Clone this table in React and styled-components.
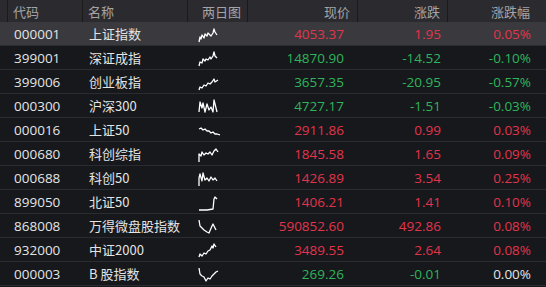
import React from 'react';
import styled, { createGlobalStyle } from 'styled-components';

const GlobalStyle = createGlobalStyle`
  html, body {
    margin: 0;
    padding: 0;
    background: #16181c;
    overflow: hidden;
  }
`;

const COLS = '8px 75px 105px 60px 110px 90px 98px';

const Table = styled.div`
  width: 546px;
  height: 287px;
  background: #16181c;
  font-family: 'Open Sans', 'Noto Sans CJK SC', sans-serif;
  color: #e4e4e4;
  overflow: hidden;
`;

const HeaderRow = styled.div`
  display: grid;
  grid-template-columns: ${COLS};
  height: 22px;
  background: #2b2b2f;
`;

const HeadCell = styled.div`
  display: flex;
  align-items: center;
  justify-content: ${(p) => (p.$right ? 'flex-end' : 'flex-start')};
  padding: ${(p) => p.$pad || '0 6px'};
  border-right: 1px solid #1a1a1d;
  font-family: 'Noto Sans CJK SC', sans-serif;
  font-size: 13px;
  color: #a4a4a8;
  &:last-child {
    border-right: none;
  }
`;

const Row = styled.div`
  display: grid;
  grid-template-columns: ${COLS};
  height: 23px;
  border-bottom: 1px solid #2a2c31;
  background: ${(p) => (p.$active ? '#3a3a3e' : '#16181c')};
`;

const Cell = styled.div`
  display: flex;
  align-items: center;
  justify-content: ${(p) => (p.$right ? 'flex-end' : 'flex-start')};
  padding: ${(p) => p.$pad || '0 6px'};
  font-size: 13.5px;
  color: ${(p) => p.$color || '#e4e4e4'};
  white-space: nowrap;
`;

const Name = styled(Cell)`
  font-family: 'Noto Sans CJK SC', sans-serif;
  font-size: 13px;
`;

const Spark = styled.svg`
  display: block;
  margin-top: 2px;
`;

const RED = '#e2344b';
const GREEN = '#2fb55b';

const tone = (v) => (v > 0 ? RED : v < 0 ? GREEN : '#e4e4e4');

const rows = [
  ['000001', '上证指数', '4053.37', '1.95', '0.05%', 1, '0,14 1,9 2,11 3,7 5,10 6,6 8,8 9,5 11,7 12,8 14,5 15,1 16,4 18,7'],
  ['399001', '深证成指', '14870.90', '-14.52', '-0.10%', -1, '0,14 1,10 3,11 4,7 6,9 7,7 9,8 11,5 12,7 14,4 15,0 16,4 18,6'],
  ['399006', '创业板指', '3657.35', '-20.95', '-0.57%', -1, '0,14 1,11 3,12 5,9 7,10 9,7 11,8 13,6 15,3 16,6 19,4'],
  ['000300', '沪深300', '4727.17', '-1.51', '-0.03%', -1, '0,12 1,2 3,8 4,3 6,12 8,4 10,10 12,7 14,12 15,0 17,8 18,12'],
  ['000016', '上证50', '2911.86', '0.99', '0.03%', 1, '0,5 2,4 4,6 6,5 8,7 10,7 12,9 14,8 16,10 18,10 21,11'],
  ['000680', '科创综指', '1845.58', '1.65', '0.09%', 1, '0,14 0,6 2,8 3,4 5,7 7,5 9,6 11,4 13,7 15,3 17,1 19,4'],
  ['000688', '科创50', '1426.89', '3.54', '0.25%', 1, '0,14 0,6 1,2 3,9 4,1 6,8 8,6 10,9 12,5 14,8 16,6 18,9'],
  ['899050', '北证50', '1406.21', '1.41', '0.10%', 1, '0,14 8,14 14,13 15,3 16,1 18,3'],
  ['868008', '万得微盘股指数', '590852.60', '492.86', '0.08%', 1, '0,0 1,6 3,8 5,10 8,12 10,13 13,6 14,4 16,8 17,10'],
  ['932000', '中证2000', '3489.55', '2.64', '0.08%', 1, '0,13 1,10 3,12 5,9 7,10 9,7 11,6 13,2 14,4 15,0 17,3'],
  ['000003', ' B 股指数', '269.26', '-0.01', '0.00%', -1, '0,0 1,6 3,8 5,9 7,13 9,10 11,11 13,8 15,6 17,4 19,3'],
];

function Sparkline({ points }) {
  return (
    <Spark width="22" height="16" viewBox="-1 -1 22 16">
      <polyline points={points} fill="none" stroke="#ffffff" strokeWidth="1.3" strokeLinejoin="round" />
    </Spark>
  );
}

export default function App() {
  return (
    <Table>
      <GlobalStyle />
      <HeaderRow>
        <HeadCell $pad="0" />
        <HeadCell $pad="0 5px">代码</HeadCell>
        <HeadCell $pad="0 5px">名称</HeadCell>
        <HeadCell $pad="0 0 0 14px">两日图</HeadCell>
        <HeadCell $right $pad="0 7px">现价</HeadCell>
        <HeadCell $right $pad="0 7px">涨跌</HeadCell>
        <HeadCell $right $pad="0 16px">涨跌幅</HeadCell>
      </HeaderRow>
      {rows.map(([code, name, price, chg, pct, dir, pts], i) => {
        const pctColor = pct === '0.00%' ? '#e4e4e4' : tone(dir);
        return (
          <Row key={code} $active={i === 0}>
            <Cell $pad="0" />
            <Cell>{code}</Cell>
            <Name>{name}</Name>
            <Cell $pad="0 0 0 10px">
              <Sparkline points={pts} />
            </Cell>
            <Cell $right $pad="0 14px" $color={tone(dir)}>{price}</Cell>
            <Cell $right $pad="0 7px" $color={tone(dir)}>{chg}</Cell>
            <Cell $right $pad="0 15px" $color={pctColor}>{pct}</Cell>
          </Row>
        );
      })}
    </Table>
  );
}
